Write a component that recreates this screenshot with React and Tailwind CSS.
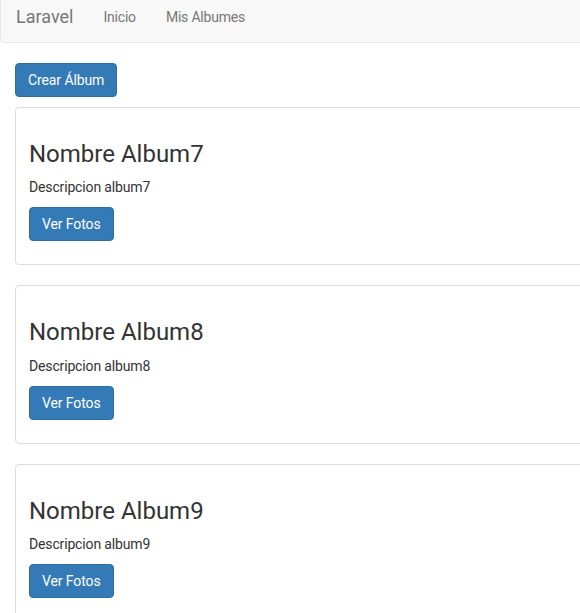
import React from 'react';

const albums = [
  { id: 7, name: 'Nombre Album7', desc: 'Descripcion album7' },
  { id: 8, name: 'Nombre Album8', desc: 'Descripcion album8' },
  { id: 9, name: 'Nombre Album9', desc: 'Descripcion album9' },
];

const BlueButton = ({ children }) => (
  <button className="bg-[#337ab7] border border-[#2e6da4] text-white text-[14px] leading-[20px] px-3 py-[6px] rounded-[4px] tracking-[-0.1px]">
    {children}
  </button>
);

const AlbumCard = ({ album }) => (
  <div className="border border-[#ddd] rounded-[4px] p-1 mb-5 bg-white">
    <div className="p-[9px]">
      <h3 className="text-[24px] leading-[26.4px] mt-5 mb-[10px] text-[#333] font-normal">{album.name}</h3>
      <p className="text-[14px] leading-[20px] mb-[10px] text-[#333] tracking-[-0.15px]">{album.desc}</p>
      <p className="mb-[10px]">
        <BlueButton>Ver Fotos</BlueButton>
      </p>
    </div>
  </div>
);

export default function App() {
  return (
    <div className="w-[580px] h-[613px] overflow-hidden bg-white" style={{ fontFamily: 'Roboto, "Liberation Sans", sans-serif' }}>
      <div className="w-[640px]">
        <nav className="-mt-[7px] h-[50px] bg-[#f8f8f8] border border-[#e7e7e7] rounded-[4px] flex items-stretch mb-5">
          <a className="px-[15px] pt-[13px] text-[18px] leading-[20px] text-[#777]">Laravel</a>
          <a className="px-[15px] pt-[13px] text-[14px] leading-[20px] text-[#777] tracking-[-0.2px]">Inicio</a>
          <a className="px-[15px] pt-[13px] text-[14px] leading-[20px] text-[#777] tracking-[-0.2px]">Mis Albumes</a>
        </nav>
        <div className="px-[15px]">
          <div className="mb-[10px]">
            <BlueButton>Crear Álbum</BlueButton>
          </div>
          {albums.map((a) => (
            <AlbumCard key={a.id} album={a} />
          ))}
        </div>
      </div>
    </div>
  );
}
